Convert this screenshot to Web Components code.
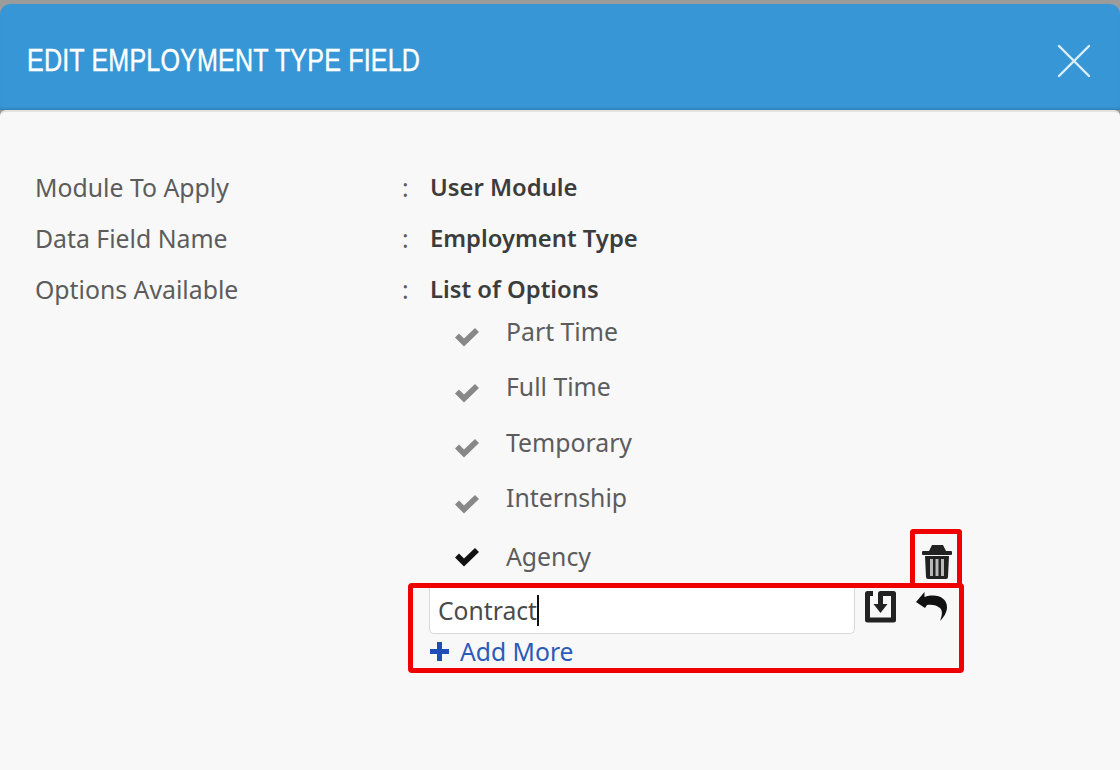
<!DOCTYPE html>
<html>
<head>
<meta charset="utf-8">
<title>Edit Employment Type Field</title>
<style>
    html, body { margin: 0; height: 100%; background: #f8f8f8; overflow: hidden; }
    body { font-family: "Noto Sans", "Liberation Sans", sans-serif; }
</style>
</head>
<body>
<edit-dialog heading="EDIT EMPLOYMENT TYPE FIELD">
    <field-row label="Module To Apply" value="User Module"></field-row>
    <field-row label="Data Field Name" value="Employment Type"></field-row>
    <field-row label="Options Available" value="List of Options"></field-row>
    <option-list>
        <option-item>Part Time</option-item>
        <option-item>Full Time</option-item>
        <option-item>Temporary</option-item>
        <option-item>Internship</option-item>
        <option-item active removable>Agency</option-item>
    </option-list>
    <option-editor value="Contract"></option-editor>
</edit-dialog>

<script>
    class EditDialog extends HTMLElement {
        constructor() {
            super();
            this.attachShadow({ mode: "open" });
            this.shadowRoot.innerHTML = `
                <style>
                    :host {
                        display: flex;
                        flex-direction: column;
                        height: 770px;
                        background: #9c9c9c;
                        padding-top: 4px;
                        box-sizing: border-box;
                    }
                    header {
                        height: 106px;
                        flex: none;
                        box-sizing: border-box;
                        display: flex;
                        align-items: center;
                        justify-content: space-between;
                        padding: 8px 29px 0 27px;
                        background: #3797d6;
                        border-radius: 10px 10px 0 0;
                        box-shadow: inset 0 -3px 3px -2px rgba(30, 80, 120, .45);
                        position: relative;
                    }
                    h1 {
                        margin: 0 0 2px;
                        font: 400 32px "Liberation Sans", sans-serif;
                        color: #fff;
                        letter-spacing: 0.2px;
                        white-space: nowrap;
                        -webkit-text-stroke: 0.4px #fff;
                        transform: scaleX(0.784);
                        transform-origin: left center;
                    }
                    svg { display: block; }
                    main {
                        flex: 1;
                        background: #f8f8f8;
                        border-top: 2px solid #e2e2e2;
                        border-radius: 6px 6px 0 0;
                        padding: 49px 0 0 35px;
                    }
                </style>
                <header>
                    <h1></h1>
                    <svg width="34" height="34" viewBox="0 0 34 34" fill="none" stroke="#dceefa" stroke-width="2.4" stroke-linecap="round">
                        <path d="M2 2 L32 32 M32 2 L2 32"/>
                    </svg>
                </header>
                <main><slot></slot></main>
            `;
            this.shadowRoot.querySelector("h1").textContent = this.getAttribute("heading");
        }
    }

    class FieldRow extends HTMLElement {
        constructor() {
            super();
            this.attachShadow({ mode: "open" });
            this.shadowRoot.innerHTML = `
                <style>
                    :host {
                        display: grid;
                        grid-template-columns: 367px 28px 1fr;
                        height: 51px;
                        align-items: center;
                        font-size: 24.8px;
                        color: #5c5c5c;
                    }
                    .value { font-weight: 600; font-size: 23.8px; color: #3c3c3c; }
                </style>
                <span class="label"></span>
                <span>:</span>
                <span class="value"></span>
            `;
            this.shadowRoot.querySelector(".label").textContent = this.getAttribute("label");
            this.shadowRoot.querySelector(".value").textContent = this.getAttribute("value");
        }
    }

    class OptionList extends HTMLElement {
        constructor() {
            super();
            this.attachShadow({ mode: "open" });
            this.shadowRoot.innerHTML = `
                <style>
                    :host {
                        display: block;
                        margin: -11px 0 0 395px;
                        width: 530px;
                    }
                </style>
                <slot></slot>
            `;
        }
    }

    class OptionItem extends HTMLElement {
        constructor() {
            super();
            this.attachShadow({ mode: "open" });
            const trash = this.hasAttribute("removable") ? `
                <span class="trash">
                    <svg width="30" height="34" viewBox="0 0 30 34">
                        <path fill="#222" d="M10 0h11l3 6h5a1 1 0 0 1 1 1v2a1 1 0 0 1-1 1H1a1 1 0 0 1-1-1V7a1 1 0 0 1 1-1h6z"/>
                        <path fill="#222" d="M3 11h24l-1 21a2 2 0 0 1-2 2H6a2 2 0 0 1-2-2z"/>
                        <path fill="#b9b9b9" d="M8 14h3v17H8zM13.500 14h3v17h-3zM19 14h3v17h-3z"/>
                    </svg>
                </span>` : "";
            this.shadowRoot.innerHTML = `
                <style>
                    :host {
                        display: flex;
                        align-items: center;
                        height: 55.500px;
                        font-size: 24.800px;
                        color: #5c5c5c;
                        position: relative;
                    }
                    .check { width: 26px; margin: 13px 26px 0 24px; flex: none; }
                    :host([active]) .check { margin-top: 8px; }
                    :host([active]) .label { padding-top: 6px; }
                    .trash {
                        position: absolute;
                        left: 480px;
                        top: 4px;
                        width: 52px;
                        height: 55px;
                        box-sizing: border-box;
                        border: 5px solid #f00000;
                        border-bottom: 0;
                        border-radius: 4px 4px 0 0;
                        display: flex;
                        align-items: center;
                        justify-content: center;
                        padding: 5px 0 0 2px;
                    }
                    svg { display: block; }
                </style>
                <svg class="check" height="20" viewBox="0 0 26 20" fill="${this.hasAttribute("active") ? "#111" : "#888"}">
                    <path d="M1 10.500 L5 6.500 L10 11.500 L21 1 L25 5 L10 19.500 Z"/>
                </svg>
                <span class="label"><slot></slot></span>
                ${trash}
            `;
        }
    }

    class OptionEditor extends HTMLElement {
        constructor() {
            super();
            this.attachShadow({ mode: "open" });
            this.shadowRoot.innerHTML = `
                <style>
                    :host {
                        display: block;
                        box-sizing: border-box;
                        width: 556px;
                        height: 90px;
                        margin: 2px 0 0 373px;
                        border: 5px solid #f00000;
                        border-radius: 4px;
                        padding: 0 0 0 16px;
                        font-size: 24.700px;
                    }
                    .line { display: flex; align-items: flex-start; }
                    .input {
                        width: 426px;
                        height: 46px;
                        box-sizing: border-box;
                        background: #fff;
                        border: 1px solid #d8d8d8;
                        border-top: 0;
                        border-radius: 0 0 5px 5px;
                        padding-left: 8px;
                        display: flex;
                        align-items: center;
                        color: #4a4a4a;
                    }
                    .caret { width: 2px; height: 31px; background: #111; }
                    .save { margin: 3px 0 0 10px; }
                    .undo { margin: 3px 0 0 20px; }
                    svg { display: block; flex: none; }
                    .add {
                        display: flex;
                        align-items: center;
                        gap: 10px;
                        color: #2a5bb8;
                        height: 36px;
                    }
                </style>
                <div class="line">
                    <div class="input"><span class="text"></span><span class="caret"></span></div>
                    <svg class="save" width="31" height="32" viewBox="0 0 31 32" fill="none">
                        <path d="M8 2.500H2.500V29H28.500V2.500H15.500V13" stroke="#222" stroke-width="5" stroke-linejoin="round"/>
                        <path d="M8.500 13H22.500L15.500 22z" fill="#222"/>
                    </svg>
                    <svg class="undo" width="32" height="30" viewBox="0 0 32 30" fill="#111">
                        <path d="M0 11 L8.500 1 V6 C21 2 31 7 31 16 C31 22 27 27 24 30 C26 25 27 20 24 17 C21 14 15 13 11 14 L9 17 Z"/>
                    </svg>
                </div>
                <div class="add">
                    <svg width="21" height="21" viewBox="0 0 21 21" fill="#1f4fb5"><path d="M8 1h5v7h7v5h-7v7H8v-7H1V8h7z"/></svg>
                    <span>Add More</span>
                </div>
            `;
            this.shadowRoot.querySelector(".text").textContent = this.getAttribute("value");
        }
    }

    customElements.define("edit-dialog", EditDialog);
    customElements.define("field-row", FieldRow);
    customElements.define("option-list", OptionList);
    customElements.define("option-item", OptionItem);
    customElements.define("option-editor", OptionEditor);
</script>
</body>
</html>
